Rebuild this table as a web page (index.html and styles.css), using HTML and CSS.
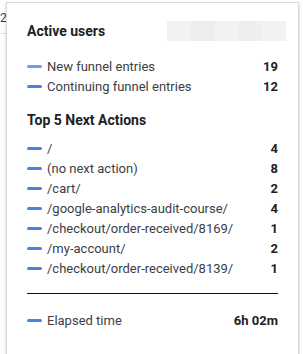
FILE: index.html
```html
<!DOCTYPE html>
<html>
<head>
<meta charset="utf-8">
<link rel="stylesheet" href="styles.css">
</head>
<body>
<div class="backdrop">
  <div class="bg-num">2</div>
  <div class="bg-line"></div>
</div>
<div class="tooltip">
  <div class="head">
    <div class="title">Active users</div>
    <div class="blur"><span></span><span class="b2"></span><span></span><span class="b2"></span><span></span></div>
  </div>
  <div class="rows first">
    <div class="row"><span class="dash light"></span><span class="label">New funnel entries</span><span class="val">19</span></div>
    <div class="row"><span class="dash"></span><span class="label">Continuing funnel entries</span><span class="val">12</span></div>
  </div>
  <div class="sub">Top 5 Next Actions</div>
  <div class="rows">
    <div class="row"><span class="dash"></span><span class="label">/</span><span class="val">4</span></div>
    <div class="row"><span class="dash"></span><span class="label">(no next action)</span><span class="val">8</span></div>
    <div class="row"><span class="dash"></span><span class="label">/cart/</span><span class="val">2</span></div>
    <div class="row"><span class="dash"></span><span class="label">/google-analytics-audit-course/</span><span class="val">4</span></div>
    <div class="row"><span class="dash"></span><span class="label">/checkout/order-received/8169/</span><span class="val">1</span></div>
    <div class="row"><span class="dash"></span><span class="label">/my-account/</span><span class="val">2</span></div>
    <div class="row"><span class="dash"></span><span class="label">/checkout/order-received/8139/</span><span class="val">1</span></div>
  </div>
  <div class="divider"></div>
  <div class="rows">
    <div class="row"><span class="dash"></span><span class="label">Elapsed time</span><span class="val">6h 02m</span></div>
  </div>
</div>
</body>
</html>
```
FILE: styles.css
```css
html, body {
  margin: 0;
  padding: 0;
  background: #fff;
  width: 303px;
  height: 354px;
  overflow: hidden;
  font-family: Roboto, "Liberation Sans", sans-serif;
}
.backdrop {
  position: relative;
  height: 354px;
}
.bg-num {
  position: absolute;
  left: 0;
  top: 11px;
  font-size: 12px;
  color: #3c4043;
}
.bg-line {
  position: absolute;
  left: 0;
  top: 33px;
  width: 6px;
  height: 1px;
  background: #e0e0e0;
}
.tooltip {
  position: absolute;
  left: 6px;
  top: 2px;
  width: 251px;
  height: 328px;
  padding: 18px 20px 19px 20px;
  background: #fff;
  border: 1px solid #dadada;
  box-shadow: 0 1px 3px rgba(0,0,0,0.2);
  color: #3c4043;
}
.head {
  display: flex;
  align-items: center;
  justify-content: space-between;
  height: 20px;
}
.title, .sub {
  font-size: 14px;
  font-weight: 700;
  color: #202124;
  line-height: 20px;
}
.blur {
  display: flex;
  width: 119px;
  height: 20px;
  margin-right: -8px;
  background: #f3f3f3;
}
.blur span {
  flex: 1;
  background: #f2f2f2;
}
.blur span.b2 {
  background: #eeeeee;
}
.rows.first {
  margin-top: 15px;
}
.sub {
  margin-top: 14px;
  margin-bottom: 8px;
}
.row {
  display: flex;
  align-items: center;
  height: 20px;
  font-size: 13px;
}
.dash {
  width: 15px;
  height: 3px;
  border-radius: 2px;
  background: #4a80e6;
  margin-right: 5px;
  flex: none;
}
.dash.light {
  background: #6f9df0;
}
.label {
  flex: 1;
  color: #3c4043;
}
.val {
  font-weight: 700;
  color: #202124;
}
.divider {
  margin-top: 15px;
  margin-bottom: 16px;
  height: 1px;
  background: #111;
}
```
